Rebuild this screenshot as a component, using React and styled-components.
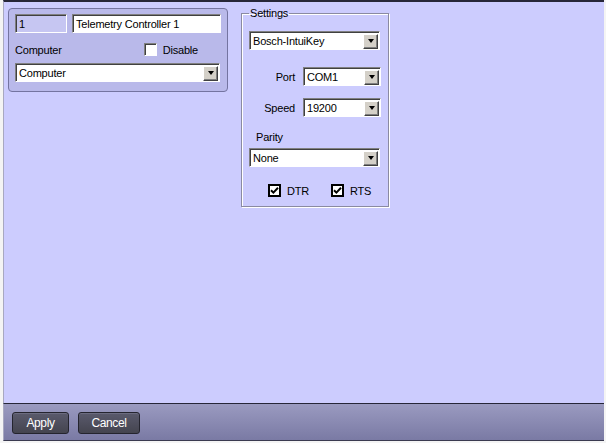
import React from 'react'
import styled, { createGlobalStyle } from 'styled-components'

const Global = createGlobalStyle`
    html, body {
        margin: 0;
        padding: 0;
        background: #ffffff;
    }
    body {
        font-family: "Liberation Sans", Arial, sans-serif;
        font-size: 11px;
        letter-spacing: -0.2px;
        color: #000;
    }
`

const Window = styled.div`
    width: 606px;
    height: 443px;
    display: flex;
    flex-direction: column;
    box-sizing: border-box;
    border-left: 3px solid #f4f4f4;
    border-right: 2px solid #f4f4f4;
    border-bottom: 2px solid #f4f4f4;
    background: #f4f4f4;
`

const Main = styled.div`
    flex: 1;
    display: flex;
    align-items: flex-start;
    gap: 13px;
    padding: 6px 0 0 4px;
    background: #ccccfe;
    border-top: 2px solid #262638;
    border-left: 1px solid #a8a8c0;
`

const Panel = styled.div`
    width: 220px;
    height: 84px;
    box-sizing: border-box;
    padding: 5px 6px 0 6px;
    background: #b9b9ea;
    border: 1px solid #7474a0;
    border-radius: 4px;
    display: flex;
    flex-direction: column;
`

const Row = styled.div`
    display: flex;
    align-items: center;
    gap: ${p => p.gap || 0}px;
    justify-content: ${p => p.justify || 'flex-start'};
    margin-top: ${p => p.top || 0}px;
    padding-left: ${p => p.indent || 0}px;
`

const Field = styled.div`
    height: 19px;
    width: ${p => p.w}px;
    box-sizing: border-box;
    display: flex;
    align-items: center;
    padding-left: 3px;
    background: ${p => (p.disabled ? '#c6c6f2' : '#ffffff')};
    border: 1px solid;
    border-color: #808080 #ffffff #ffffff #808080;
    box-shadow: inset 1px 1px 0 #404040;
    white-space: nowrap;
    overflow: hidden;
`

const SelectBox = styled(Field)`
    justify-content: space-between;
    padding-right: 1px;
`

const DropBtn = styled.div`
    width: 15px;
    height: 15px;
    margin-top: 1px;
    box-sizing: border-box;
    background: #d4d0c8;
    border: 1px solid;
    border-color: #ffffff #404040 #404040 #ffffff;
    box-shadow: inset -1px -1px 0 #808080;
    display: flex;
    align-items: center;
    justify-content: center;
    &::after {
        content: '';
        border-left: 3.5px solid transparent;
        border-right: 3.5px solid transparent;
        border-top: 4px solid #000;
    }
`

const Label = styled.span`
    width: ${p => (p.w ? `${p.w}px` : 'auto')};
    text-align: ${p => p.align || 'left'};
    white-space: nowrap;
`

const CheckWrap = styled.label`
    display: flex;
    align-items: center;
    gap: 6px;
    margin-right: ${p => p.right || 0}px;
`

const Box = styled.span`
    width: 13px;
    height: 13px;
    box-sizing: border-box;
    background: #fff;
    display: flex;
    align-items: center;
    justify-content: center;
    ${p => p.bold
        ? 'border: 2px solid #000;'
        : 'border: 1px solid; border-color: #808080 #ffffff #ffffff #808080; box-shadow: inset 1px 1px 0 #404040;'}
`

const Settings = styled.fieldset`
    margin: -1px 0 0 0;
    width: 148px;
    height: 200px;
    box-sizing: border-box;
    padding: 2px 7px 0 7px;
    border: 1px solid #8a8aa2;
    box-shadow: inset 1px 1px 0 #ffffff, 1px 1px 0 #ffffff;
    display: flex;
    flex-direction: column;
`

const Legend = styled.legend`
    padding: 0 1px;
    margin-left: 0;
`

const Spacer = styled.div`
    flex: 1;
    background: #ccccfe;
`

const Footer = styled.div`
    height: 36px;
    display: flex;
    align-items: center;
    gap: 9px;
    padding: 0 0 0 8px;
    background: linear-gradient(#9a9ac0, #7a7aa4);
    border-top: 1px solid #262638;
    border-bottom: 1px solid #3a3a50;
    border-left: 1px solid #a8a8c0;
`

const Button = styled.button`
    width: ${p => p.w}px;
    height: 22px;
    margin-top: 1px;
    font-family: "Liberation Sans", Arial, sans-serif;
    font-size: 12px;
    letter-spacing: -0.4px;
    color: #ffffff;
    background: linear-gradient(#5a5a6c, #44444f);
    border: 1px solid #24242e;
    border-radius: 3px;
    box-shadow: inset 0 1px 0 #6c6c80;
    padding: 0;
`

function Check({ bold }) {
    return (
        <Box bold={bold}>
            {bold && (
                <svg width="9" height="9" viewBox="0 0 9 9">
                    <path d="M1 4.2 L3.4 6.6 L8 1.8" fill="none" stroke="#000" strokeWidth="2" />
                </svg>
            )}
        </Box>
    )
}

function Select({ w, value }) {
    return (
        <SelectBox w={w}>
            <span>{value}</span>
            <DropBtn />
        </SelectBox>
    )
}

export default function App() {
    return (
        <>
            <Global />
            <Window>
                <Main>
                    <Panel>
                        <Row gap={5}>
                            <Field w={52} disabled>1</Field>
                            <Field w={149}>Telemetry Controller 1</Field>
                        </Row>
                        <Row justify="space-between" top={10}>
                            <Label>Computer</Label>
                            <CheckWrap right={23}>
                                <Check />
                                <span>Disable</span>
                            </CheckWrap>
                        </Row>
                        <Row top={7}>
                            <Select w={205} value="Computer" />
                        </Row>
                    </Panel>
                    <Settings>
                        <Legend>Settings</Legend>
                        <Row top={10}>
                            <Select w={131} value="Bosch-IntuiKey" />
                        </Row>
                        <Row top={17} gap={8}>
                            <Label w={46} align="right">Port</Label>
                            <Select w={78} value="COM1" />
                        </Row>
                        <Row top={12} gap={8}>
                            <Label w={46} align="right">Speed</Label>
                            <Select w={78} value="19200" />
                        </Row>
                        <Row top={14} indent={7}>
                            <Label>Parity</Label>
                        </Row>
                        <Row top={5}>
                            <Select w={131} value="None" />
                        </Row>
                        <Row top={17} indent={19} gap={22}>
                            <CheckWrap>
                                <Check bold />
                                <span>DTR</span>
                            </CheckWrap>
                            <CheckWrap>
                                <Check bold />
                                <span>RTS</span>
                            </CheckWrap>
                        </Row>
                    </Settings>
                    <Spacer />
                </Main>
                <Footer>
                    <Button w={57}>Apply</Button>
                    <Button w={62}>Cancel</Button>
                </Footer>
            </Window>
        </>
    )
}
